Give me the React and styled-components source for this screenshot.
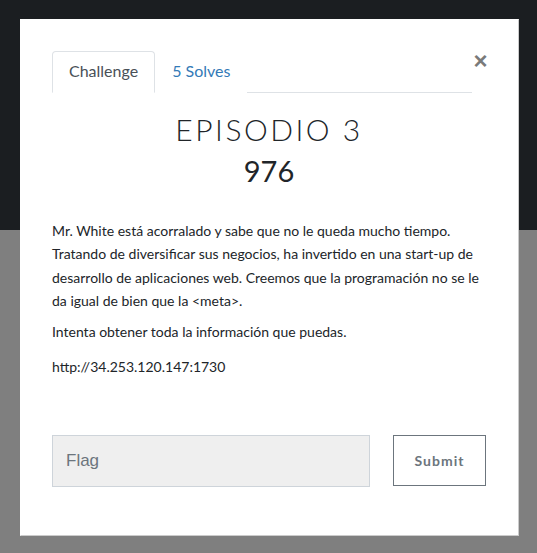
import React from "react";
import styled, { createGlobalStyle } from "styled-components";

const GlobalStyle = createGlobalStyle`
    html, body {
        margin: 0;
        padding: 0;
        background: #7f7f7f;
    }
    body {
        font-family: Lato, "Noto Sans", sans-serif;
        color: #212529;
    }
`;

const Page = styled.div`
    width: 537px;
    height: 553px;
    background: linear-gradient(#1b1e21 0, #1b1e21 230px, #7f7f7f 230px);
    padding: 19px 0 0 20px;
    box-sizing: border-box;
    overflow: hidden;
`;

const Modal = styled.div`
    width: 499px;
    height: 517px;
    box-sizing: border-box;
    background: #fff;
    border: 1px solid rgba(0, 0, 0, 0.2);
    border-top-color: transparent;
    border-left-color: transparent;
    padding: 31px 32px 0 31px;
    display: flex;
    flex-direction: column;
`;

const TopRow = styled.div`
    display: flex;
    align-items: flex-start;
`;

const Tabs = styled.ul`
    flex: 1;
    display: flex;
    list-style: none;
    margin: 0;
    padding: 0;
    border-bottom: 1px solid #dee2e6;
`;

const Tab = styled.li`
    padding: 7px 16px 9px;
    font-size: 16px;
    line-height: 24px;
    margin-bottom: -1px;
    border: 1px solid ${(p) => (p.$active ? "#dee2e6" : "transparent")};
    border-bottom-color: ${(p) => (p.$active ? "#fff" : "transparent")};
    border-radius: 4px 4px 0 0;
    color: ${(p) => (p.$active ? "#495057" : "#337ab7")};
    background: #fff;
`;

const Close = styled.button`
    border: 0;
    background: none;
    padding: 0;
    margin: 0 0 0 3px;
    width: 11px;
    height: 24px;
    font-size: 24px;
    line-height: 20px;
    font-weight: 700;
    color: #7a7a7a;
    font-family: "Liberation Sans", Arial, sans-serif;
    display: flex;
    justify-content: center;
`;

const Title = styled.h2`
    margin: 16px 0 0;
    text-align: center;
    font-weight: 300;
    font-size: 30px;
    line-height: 40px;
    letter-spacing: 2.5px;
    color: #212529;
`;

const Value = styled.h3`
    margin: 4px 0 0;
    text-align: center;
    font-weight: 400;
    font-size: 29px;
    line-height: 36px;
    color: #212529;
`;

const Description = styled.div`
    margin-top: 30px;
    font-size: 14px;
    line-height: 23.3px;
`;

const Para = styled.p`
    margin: 0 0 ${(p) => p.$gap}px;
`;

const FormRow = styled.form`
    margin-top: 56px;
    display: flex;
    gap: 23px;
`;

const FlagInput = styled.input`
    width: 318px;
    height: 52px;
    box-sizing: border-box;
    background: #efefef;
    border: 1px solid #ced4da;
    padding: 0 13px;
    font-family: "Liberation Sans", Arial, sans-serif;
    font-size: 17px;
    color: #495057;
    outline: none;
    &::placeholder {
        color: #6c757d;
    }
`;

const SubmitButton = styled.button`
    width: 93px;
    height: 51px;
    box-sizing: border-box;
    background: #fff;
    border: 1px solid #6c757d;
    font-family: Lato, sans-serif;
    font-weight: 700;
    font-size: 14px;
    letter-spacing: 1px;
    color: #6c757d;
`;

const App = () => {
    return (
        <Page>
            <GlobalStyle />
            <Modal>
                <TopRow>
                    <Tabs>
                        <Tab $active>Challenge</Tab>
                        <Tab>5 Solves</Tab>
                    </Tabs>
                    <Close>×</Close>
                </TopRow>
                <Title>EPISODIO 3</Title>
                <Value>976</Value>
                <Description>
                    <Para $gap={8}>
                        Mr. White está acorralado y sabe que no le queda mucho tiempo. Tratando de diversificar sus
                        negocios, ha invertido en una start-up de desarrollo de aplicaciones web. Creemos que la
                        programación no se le da igual de bien que la &lt;meta&gt;.
                    </Para>
                    <Para $gap={12}>Intenta obtener toda la información que puedas.</Para>
                    <Para $gap={0}>http://34.253.120.147:1730</Para>
                </Description>
                <FormRow onSubmit={(e) => e.preventDefault()}>
                    <FlagInput placeholder="Flag" />
                    <SubmitButton type="submit">Submit</SubmitButton>
                </FormRow>
            </Modal>
        </Page>
    );
};

export default App;
